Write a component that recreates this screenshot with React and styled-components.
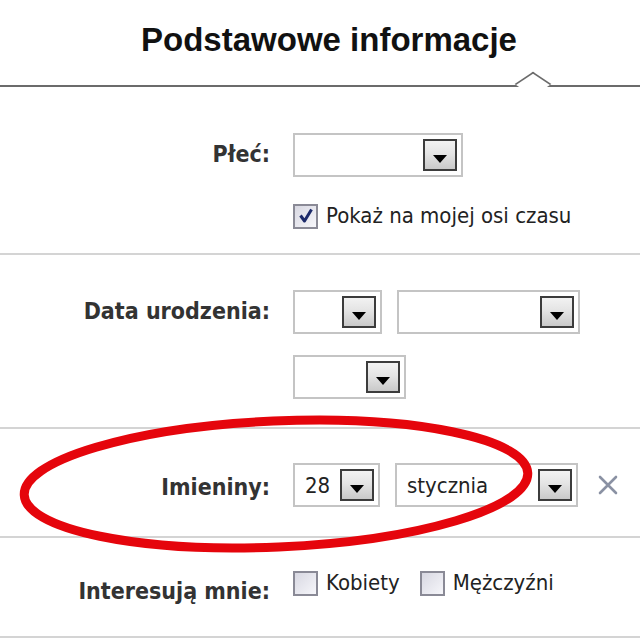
import React from 'react';
import styled, { createGlobalStyle } from 'styled-components';

const GlobalStyle = createGlobalStyle`
    body {
        margin: 0;
        background: #fff;
    }
`;

const Page = styled.div`
    position: relative;
    width: 640px;
    height: 640px;
    overflow: hidden;
    background: #fff;
    font-family: "DejaVu Sans Condensed", "DejaVu Sans", sans-serif;
    font-stretch: condensed;
`;

const Header = styled.div`
    position: relative;
    height: 87px;
    border-bottom: 2px solid #6b6b6b;
    box-sizing: border-box;
    padding: 21px 0 0 18px;
    text-align: center;
`;

const Title = styled.h1`
    margin: 0;
    font-family: "Liberation Sans", Arial, sans-serif;
    font-stretch: normal;
    font-size: 33px;
    line-height: 38px;
    font-weight: bold;
    color: #111;
`;

// little notch sitting on the header line
const Notch = styled.span`
    position: absolute;
    left: 520px;
    bottom: -12px;
    width: 24px;
    height: 24px;
    background: #fff;
    border-top: 2px solid #6b6b6b;
    border-left: 2px solid #6b6b6b;
    transform: scaleY(0.66) rotate(45deg);
`;

const Section = styled.div`
    display: grid;
    grid-template-columns: 270px 1fr;
    column-gap: 23px;
    align-items: start;
    padding: ${p => p.$pad};
    border-bottom: 2px solid #d4d4d4;
    height: ${p => p.$h}px;
    box-sizing: border-box;
`;

const Label = styled.div`
    text-align: right;
    font-weight: bold;
    font-size: 23px;
    color: #333;
    line-height: 28px;
    padding-top: ${p => p.$top || 8}px;
`;

const Controls = styled.div`
    display: flex;
    flex-direction: column;
    gap: ${p => p.$gap || 22}px;
`;

const Line = styled.div`
    display: flex;
    align-items: center;
    gap: ${p => p.$gap || 15}px;
`;

const SelectBox = styled.div`
    box-sizing: border-box;
    width: ${p => p.$w}px;
    height: 44px;
    border: 2px solid #c4c4c4;
    background: #fff;
    display: flex;
    align-items: center;
    justify-content: space-between;
    padding: 0 4px 0 10px;
    font-size: 22px;
    color: #222;
`;

const ArrowButton = styled.span`
    box-sizing: border-box;
    width: 34px;
    height: 32px;
    border: 2px solid #3c3c3c;
    background: linear-gradient(#f2f2f2, #e4e4e4 45%, #c9c9c9);
    display: flex;
    align-items: flex-end;
    justify-content: center;
    padding-bottom: 6px;
    flex-shrink: 0;
`;

const Triangle = styled.span`
    width: 0;
    height: 0;
    border-left: 7px solid transparent;
    border-right: 7px solid transparent;
    border-top: 8px solid #000;
`;

const Check = styled.label`
    display: flex;
    align-items: center;
    gap: 8px;
    font-size: 22px;
    color: #222;
    line-height: 26px;
`;

const Box = styled.span`
    box-sizing: border-box;
    width: 25px;
    height: 25px;
    border: 2px solid #8a8a96;
    background: linear-gradient(135deg, #d8d8e2, #f6f6fa);
    display: flex;
    align-items: center;
    justify-content: center;
    flex-shrink: 0;
`;

const RemoveX = styled.svg`
    width: 22px;
    height: 22px;
    margin-left: 4px;
`;

const Ellipse = styled.svg`
    position: absolute;
    left: 0;
    top: 0;
    pointer-events: none;
`;

const Select = ({ w, value }) => (
    <SelectBox $w={w}>
        <span>{value}</span>
        <ArrowButton><Triangle /></ArrowButton>
    </SelectBox>
);

const Checkbox = ({ checked, children }) => (
    <Check>
        <Box>
            {checked && (
                <svg width="16" height="16" viewBox="0 0 16 16">
                    <path d="M2.5 7.5 L6.5 13 L13.5 1.5" fill="none" stroke="#1c2a6a" strokeWidth="3" strokeLinejoin="round" />
                </svg>
            )}
        </Box>
        {children}
    </Check>
);

const App = () => {
    return (<Page>
        <GlobalStyle />
        <Header>
            <Title>Podstawowe informacje</Title>
            <Notch />
        </Header>

        <Section $pad="46px 0 0 0" $h={168}>
            <Label $top={7}>Płeć:</Label>
            <Controls $gap={26}>
                <Select w={170} />
                <Checkbox checked>Pokaż na mojej osi czasu</Checkbox>
            </Controls>
        </Section>

        <Section $pad="35px 0 0 0" $h={174}>
            <Label $top={7}>Data urodzenia:</Label>
            <Controls $gap={21}>
                <Line>
                    <Select w={89} />
                    <Select w={183} />
                </Line>
                <Select w={113} />
            </Controls>
        </Section>

        <Section $pad="34px 0 0 0" $h={109}>
            <Label $top={10}>Imieniny:</Label>
            <Line>
                <Select w={87} value="28" />
                <Select w={183} value="stycznia" />
                <RemoveX viewBox="0 0 22 22">
                    <path d="M3 3 L19 19 M19 3 L3 19" stroke="#8a91a3" strokeWidth="2.6" strokeLinecap="round" />
                </RemoveX>
            </Line>
        </Section>

        <Section $pad="32px 0 0 0" $h={100}>
            <Label $top={7}>Interesują mnie:</Label>
            <Line $gap={20}>
                <Checkbox>Kobiety</Checkbox>
                <Checkbox>Mężczyźni</Checkbox>
            </Line>
        </Section>

        <Ellipse width="640" height="640" viewBox="0 0 640 640">
            <ellipse cx="276" cy="484" rx="252" ry="63" fill="none" stroke="#e5050c" strokeWidth="9" transform="rotate(-2.5 276 484)" />
        </Ellipse>
    </Page>);
};

export default App;
